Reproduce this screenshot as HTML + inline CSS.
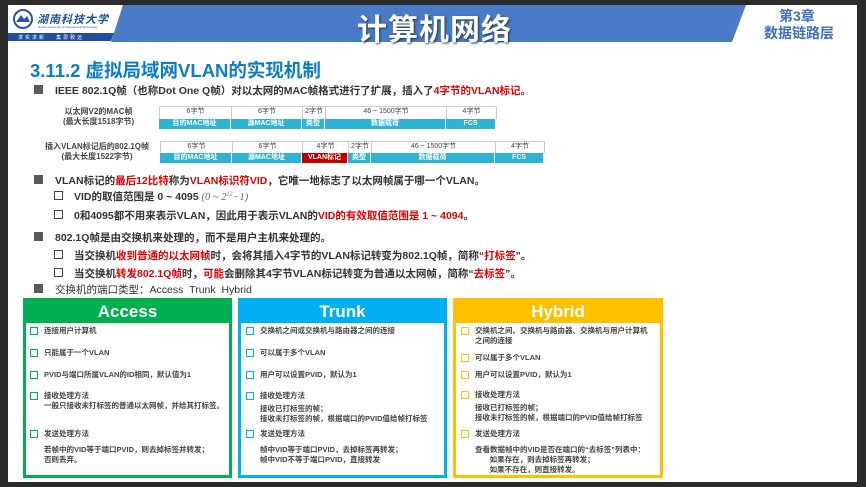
<!DOCTYPE html>
<html><head><meta charset="utf-8">
<style>
*{margin:0;padding:0;box-sizing:border-box}
body{width:866px;height:487px;background:#2b2b2b;position:relative;overflow:hidden;font-family:"Liberation Sans","Noto Sans CJK SC",sans-serif}
#slide{position:absolute;left:8px;top:5px;width:849px;height:477px;background:#fff;overflow:hidden}
.a{position:absolute;white-space:nowrap}
.r{color:#e00000}
.t{font-size:10.5px;color:#333;font-weight:bold}
.sq{position:absolute;width:9px;height:9px;background:#595959}
.cb{position:absolute;width:9px;height:9px;border:1.3px solid #444}
.fr{position:absolute;display:flex;font-size:7px}
.fr div{text-align:center;height:100%;line-height:10px}
.top div{border-right:1px solid #ccc;color:#444}
.bot div{background:#2fb3d3;color:#fff;font-weight:bold;border-right:1px solid #fff}
.box{position:absolute;top:293px;height:180px;border:3px solid}
.box .h{height:22px;color:#fff;font-weight:bold;font-size:17px;text-align:center;line-height:22px}
.it{position:absolute;font-size:7.5px;color:#444;white-space:nowrap;line-height:10px;font-weight:bold}
.c{position:absolute;width:8px;height:8px;border:1.5px solid}
.lbl{position:absolute;font-size:8px;color:#444;text-align:center;line-height:10px;font-weight:bold;white-space:nowrap}
</style></head><body>
<div id="slide">
<svg class="a" style="left:0;top:0" width="849" height="37">
<polygon points="0,0 849,0 849,37 0,37" fill="#4a7bc8"/>
<polygon points="0,0 115,0 103,37 0,37" fill="#fff"/>
<polygon points="0,28 106,28 103,36 0,36" fill="#1f4f9e"/>
<polygon points="738,0 849,0 849,37 724,37" fill="#fff"/>
<circle cx="15" cy="14" r="9" fill="#fff" stroke="#2a56a0" stroke-width="2"/>
<path d="M8 17 L13 10 L16 14 L19 11 L22 17 Z" fill="#2a56a0"/>
</svg>
<div class="a" style="left:29px;top:6px;font-size:11px;color:#1f4f9e;font-style:italic;font-weight:bold;letter-spacing:1px">湖南科技大学</div>
<div class="a" style="left:30px;top:20px;font-size:3px;color:#1f4f9e">Hunan University of Science and Technology</div>
<div class="a" style="left:10px;top:29px;font-size:5px;color:#fff;letter-spacing:2px">求实求新 &nbsp; 集思致远</div>
<div class="a" style="left:349px;top:0px;font-size:30px;color:#fff;font-weight:bold;letter-spacing:1px;text-shadow:1px 1px 2px #234">计算机网络</div>
<div class="a" style="left:771px;top:2px;font-size:14px;color:#3e6fbd;font-weight:bold;line-height:18px">第3章</div>
<div class="a" style="left:756px;top:19px;font-size:14px;color:#3e6fbd;font-weight:bold;line-height:18px">数据链路层</div>
<div class="a" style="left:22px;top:52px;font-size:18.5px;color:#0a7cc8;font-weight:bold">3.11.2 虚拟局域网VLAN的实现机制</div>
<div class="sq" style="left:26px;top:80px"></div>
<div class="a t" style="left:47px;top:78px">IEEE 802.1Q帧（也称Dot One Q帧）对以太网的MAC帧格式进行了扩展，插入了<span class="r">4字节的VLAN标记</span>。</div>
<div class="lbl" style="left:55px;top:102px">以太网V2的MAC帧<br>(最大长度1518字节)</div>
<div class="fr top" style="left:151px;top:101px;height:13px;border:1px solid #ccc;border-bottom:none">
<div style="width:72px">6字节</div><div style="width:71px">6字节</div><div style="width:23px">2字节</div><div style="width:121px">46 ~ 1500字节</div><div style="width:49px;border:none">4字节</div></div>
<div class="fr bot" style="left:151px;top:114px;height:10px">
<div style="width:72px">目的MAC地址</div><div style="width:71px">源MAC地址</div><div style="width:23px">类型</div><div style="width:121px">数据载荷</div><div style="width:49px;border:none">FCS</div></div>
<div class="lbl" style="left:37px;top:137px">插入VLAN标记后的802.1Q帧<br>(最大长度1522字节)</div>
<div class="fr top" style="left:152px;top:136px;height:12px;border:1px solid #ccc;border-bottom:none">
<div style="width:72px">6字节</div><div style="width:70px">6字节</div><div style="width:46px">4字节</div><div style="width:23px">2字节</div><div style="width:124px">46 ~ 1500字节</div><div style="width:48px;border:none">4字节</div></div>
<div class="fr bot" style="left:152px;top:148px;height:10px">
<div style="width:72px">目的MAC地址</div><div style="width:70px">源MAC地址</div><div style="width:46px;background:#c00000">VLAN标记</div><div style="width:23px">类型</div><div style="width:124px">数据载荷</div><div style="width:48px;border:none">FCS</div></div>
<div class="sq" style="left:26px;top:170px"></div>
<div class="a t" style="left:47px;top:168px">VLAN标记的<span class="r">最后12比特</span>称为<span class="r">VLAN标识符VID</span>，它唯一地标志了以太网帧属于哪一个VLAN。</div>
<div class="cb" style="left:46px;top:186px"></div>
<div class="a t" style="left:66px;top:184px">VID的取值范围是 0 ~ 4095 <span style="font-family:'Liberation Serif',serif;font-style:italic;font-weight:normal;color:#666">(0 ~ 2<sup style="font-size:6px">12</sup>−1)</span></div>
<div class="cb" style="left:46px;top:205px"></div>
<div class="a t" style="left:66px;top:203px">0和4095都不用来表示VLAN，因此用于表示VLAN的<span class="r">VID的有效取值范围是 1 ~ 4094</span>。</div>
<div class="sq" style="left:26px;top:227px"></div>
<div class="a t r" style="left:47px;top:225px">802.1Q帧是由交换机来处理的，而不是用户主机来处理的。</div>
<div class="cb" style="left:46px;top:245px"></div>
<div class="a t" style="left:66px;top:243px">当交换机<span class="r">收到普通的以太网帧</span>时，会将其插入4字节的VLAN标记转变为802.1Q帧，简称“<span class="r">打标签</span>”。</div>
<div class="cb" style="left:46px;top:263px"></div>
<div class="a t" style="left:66px;top:261px">当交换机<span class="r">转发802.1Q帧</span>时，<span class="r">可能</span>会删除其4字节VLAN标记转变为普通以太网帧，简称“<span class="r">去标签</span>”。</div>
<div class="sq" style="left:26px;top:279px"></div>
<div class="a t" style="left:47px;top:277px;font-weight:normal;color:#333">交换机的端口类型：Access &nbsp;Trunk &nbsp;Hybrid</div>
<div class="box" style="left:15px;width:209px;border-color:#00b050"><div class="h" style="background:#00b050">Access</div></div>
<div class="box" style="left:230px;width:209px;border-color:#00b0f0"><div class="h" style="background:#00b0f0">Trunk</div></div>
<div class="box" style="left:445px;width:210px;border-color:#ffc000"><div class="h" style="background:#ffc000">Hybrid</div></div>
<div class="c" style="left:22px;top:322px;border-color:#00b050"></div><div class="it" style="left:36px;top:321px">连接用户计算机</div>
<div class="c" style="left:22px;top:344px;border-color:#00b050"></div><div class="it" style="left:36px;top:343px">只能属于一个VLAN</div>
<div class="c" style="left:22px;top:366px;border-color:#00b050"></div><div class="it" style="left:36px;top:365px">PVID与端口所属VLAN的ID相同，默认值为1</div>
<div class="c" style="left:22px;top:387px;border-color:#00b050"></div><div class="it" style="left:36px;top:386px">接收处理方法<br>一般只接收未打标签的普通以太网帧，并给其打标签。</div>
<div class="c" style="left:22px;top:425px;border-color:#00b050"></div><div class="it" style="left:36px;top:424px">发送处理方法</div>
<div class="it" style="left:36px;top:440px">若帧中的VID等于端口PVID，则去掉标签并转发；<br>否则丢弃。</div>
<div class="c" style="left:238px;top:322px;border-color:#00b0f0"></div><div class="it" style="left:252px;top:321px">交换机之间或交换机与路由器之间的连接</div>
<div class="c" style="left:238px;top:344px;border-color:#00b0f0"></div><div class="it" style="left:252px;top:343px">可以属于多个VLAN</div>
<div class="c" style="left:238px;top:366px;border-color:#00b0f0"></div><div class="it" style="left:252px;top:365px">用户可以设置PVID，默认为1</div>
<div class="c" style="left:238px;top:387px;border-color:#00b0f0"></div><div class="it" style="left:252px;top:386px">接收处理方法</div>
<div class="it" style="left:252px;top:399px">接收已打标签的帧；<br>接收未打标签的帧，根据端口的PVID值给帧打标签</div>
<div class="c" style="left:238px;top:425px;border-color:#00b0f0"></div><div class="it" style="left:252px;top:424px">发送处理方法</div>
<div class="it" style="left:252px;top:440px">帧中VID等于端口PVID，去掉标签再转发；<br>帧中VID不等于端口PVID，直接转发</div>
<div class="c" style="left:453px;top:322px;border-color:#ffc000"></div><div class="it" style="left:467px;top:321px">交换机之间、交换机与路由器、交换机与用户计算机<br>之间的连接</div>
<div class="c" style="left:453px;top:349px;border-color:#ffc000"></div><div class="it" style="left:467px;top:348px">可以属于多个VLAN</div>
<div class="c" style="left:453px;top:366px;border-color:#ffc000"></div><div class="it" style="left:467px;top:365px">用户可以设置PVID，默认为1</div>
<div class="c" style="left:453px;top:386px;border-color:#ffc000"></div><div class="it" style="left:467px;top:385px">接收处理方法</div>
<div class="it" style="left:467px;top:398px">接收已打标签的帧；<br>接收未打标签的帧，根据端口的PVID值给帧打标签</div>
<div class="c" style="left:453px;top:425px;border-color:#ffc000"></div><div class="it" style="left:467px;top:424px">发送处理方法</div>
<div class="it" style="left:467px;top:440px">查看数据帧中的VID是否在端口的“去标签”列表中：<br>&nbsp;&nbsp;&nbsp;&nbsp;&nbsp;&nbsp;&nbsp;如果存在，则去掉标签再转发；<br>&nbsp;&nbsp;&nbsp;&nbsp;&nbsp;&nbsp;&nbsp;如果不存在，则直接转发。</div>
</div>
</body></html>
